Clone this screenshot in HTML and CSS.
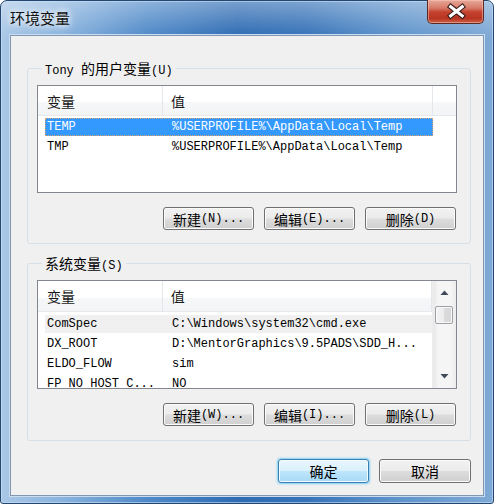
FILE: index.html
```html
<!DOCTYPE html>
<html lang="zh-CN">
<head>
<meta charset="utf-8">
<title>环境变量</title>
<link rel="stylesheet" href="styles.css">
</head>
<body>
<div class="window">
  <div class="titlebar">
    <span class="title">环境变量</span>
    <div class="close">
      <svg width="57" height="24" viewBox="0 0 57 24">
        <path d="M23.5 6.5 L35.5 16 M35.5 6.5 L23.5 16" stroke="#3a1d1a" stroke-width="5.5" stroke-linecap="square" fill="none"/>
        <path d="M23.5 6.5 L35.5 16 M35.5 6.5 L23.5 16" stroke="#ffffff" stroke-width="3.2" stroke-linecap="square" fill="none"/>
      </svg>
    </div>
  </div>
  <div class="client">
    <fieldset class="group first">
      <legend>Tony <span class="zh">的用户变量</span>(U)</legend>
      <div class="list">
        <div class="listmain">
          <div class="header">
            <div class="hcell c1"><span class="zh">变量</span></div>
            <div class="hcell c2"><span class="zh">值</span></div>
            <div class="hcell filler"></div>
          </div>
          <div class="rows">
            <div class="row selected"><span class="c1">TEMP</span><span class="c2">%USERPROFILE%\AppData\Local\Temp</span></div>
            <div class="row"><span class="c1">TMP</span><span class="c2">%USERPROFILE%\AppData\Local\Temp</span></div>
          </div>
        </div>
      </div>
      <div class="buttons">
        <button class="btn"><span class="zh">新建</span>(N)...</button>
        <button class="btn"><span class="zh">编辑</span>(E)...</button>
        <button class="btn"><span class="zh">删除</span>(D)</button>
      </div>
    </fieldset>

    <fieldset class="group second">
      <legend><span class="zh">系统变量</span>(S)</legend>
      <div class="list tall">
        <div class="listmain">
          <div class="header">
            <div class="hcell c1"><span class="zh">变量</span></div>
            <div class="hcell c2"><span class="zh">值</span></div>
          </div>
          <div class="rows">
            <div class="row hot"><span class="c1">ComSpec</span><span class="c2">C:\Windows\system32\cmd.exe</span></div>
            <div class="row"><span class="c1">DX_ROOT</span><span class="c2">D:\MentorGraphics\9.5PADS\SDD_H...</span></div>
            <div class="row"><span class="c1">ELDO_FLOW</span><span class="c2">sim</span></div>
            <div class="row"><span class="c1">FP_NO_HOST_C...</span><span class="c2">NO</span></div>
          </div>
        </div>
        <div class="scrollbar">
          <div class="sbtn">
            <svg width="9" height="6" viewBox="0 0 9 6"><polygon points="4.5,0.5 8.5,5 0.5,5" fill="#3f4a57"/></svg>
          </div>
          <div class="track"><div class="thumb"></div></div>
          <div class="sbtn">
            <svg width="9" height="6" viewBox="0 0 9 6"><polygon points="0.5,1 8.5,1 4.5,5.5" fill="#3f4a57"/></svg>
          </div>
        </div>
      </div>
      <div class="buttons">
        <button class="btn"><span class="zh">新建</span>(W)...</button>
        <button class="btn"><span class="zh">编辑</span>(I)...</button>
        <button class="btn"><span class="zh">删除</span>(L)</button>
      </div>
    </fieldset>

    <div class="dialog-buttons">
      <button class="btn big default"><span class="zh">确定</span></button>
      <button class="btn big"><span class="zh">取消</span></button>
    </div>
  </div>
</div>
</body>
</html>
```
FILE: styles.css
```css
html, body {
  margin: 0;
  padding: 0;
  background: #ffffff;
}

body {
  width: 494px;
  height: 504px;
  overflow: hidden;
  font-family: "Liberation Mono", "Noto Sans CJK SC", monospace;
  font-size: 12px;
  color: #000;
}

.zh {
  font-family: "Noto Sans CJK SC", sans-serif;
  font-size: 14px;
}

.window {
  width: 494px;
  height: 504px;
  box-sizing: border-box;
  border: 1px solid #24466f;
  border-radius: 7px 7px 3px 3px;
  padding: 0 9px 7px 9px;
  display: flex;
  flex-direction: column;
  background:
    linear-gradient(180deg, rgba(255,255,255,0.35) 0px, rgba(255,255,255,0.05) 30px, rgba(255,255,255,0) 40px),
    linear-gradient(90deg, #a9c7e6 0%, #8ab4de 12%, #4f89c8 30%, #2f6cb3 48%, #3773b8 62%, #5e93cb 80%, #7fa9d6 100%);
  box-shadow: inset 0 0 0 1px rgba(200, 225, 250, 0.6);
}

.titlebar {
  height: 34px;
  display: flex;
  justify-content: space-between;
  align-items: flex-start;
}

.title {
  font-family: "Noto Sans CJK SC", sans-serif;
  font-size: 15px;
  line-height: 20px;
  padding-top: 7px;
  color: #101010;
  text-shadow: 0 0 6px #ffffff, 0 0 10px rgba(255,255,255,0.9);
}

.close {
  width: 57px;
  height: 24px;
  margin-top: -1px;
  box-sizing: border-box;
  border: 1px solid #5b2a24;
  border-top: none;
  border-radius: 0 0 5px 5px;
  background: linear-gradient(180deg, #e6a899 0%, #d77a68 35%, #c4432f 52%, #b83422 80%, #d06248 100%);
  box-shadow: inset 0 0 0 1px rgba(255, 210, 200, 0.45);
  display: flex;
  align-items: center;
  justify-content: center;
}

.close svg {
  display: block;
}

.client {
  flex: 1;
  background: #f0f0f0;
  border: 1px solid #8297b2;
  box-shadow: 0 0 0 1px #c9dcf0;
  padding: 0 12px 0 16px;
  display: flex;
  flex-direction: column;
}

.group {
  margin: 0;
  border: 1px solid #d5dfe5;
  border-radius: 3px;
  padding: 0 13px 13px 9px;
  min-width: 0;
}

.group.first {
  margin-top: 24px;
}

.group.second {
  margin-top: 11px;
  padding-bottom: 14px;
}

.group legend {
  margin-left: 5px;
  padding: 0 3px;
  line-height: 16px;
  height: 16px;
  white-space: pre;
}

.list {
  margin-top: 9px;
  height: 108px;
  box-sizing: border-box;
  border: 1px solid #828790;
  background: #ffffff;
  display: flex;
  overflow: hidden;
}

.list.tall {
  margin-top: 9px;
  height: 109px;
}

.listmain {
  flex: 1;
  min-width: 0;
  display: flex;
  flex-direction: column;
}

.header {
  display: flex;
  height: 30px;
  flex: none;
  box-sizing: border-box;
  border-bottom: 1px solid #e5e8ec;
  background: linear-gradient(180deg, #ffffff 0%, #ffffff 55%, #f6f7f9 56%, #f3f4f6 100%);
}

.list.tall .header {
  height: 31px;
}

.hcell {
  display: flex;
  align-items: center;
  box-sizing: border-box;
  color: #1a1a1a;
}

.hcell.c1 {
  width: 125px;
  padding-left: 9px;
  border-right: 1px solid #e3e6ea;
}

.hcell.c2 {
  width: 270px;
  padding-left: 8px;
  border-right: 1px solid #e3e6ea;
}

.hcell.filler {
  flex: 1;
}

.rows {
  padding-top: 2px;
}

.list.tall .rows {
  padding-top: 3px;
}

.row {
  display: flex;
  margin-left: 7px;
  width: 388px;
  height: 18px;
  line-height: 18px;
  margin-bottom: 2px;
  white-space: pre;
  overflow: hidden;
  flex: none;
}

.row .c1 {
  width: 118px;
  padding-left: 2px;
  box-sizing: border-box;
  overflow: hidden;
}

.row .c2 {
  padding-left: 9px;
}

.row.selected {
  background: #3399ff;
  color: #ffffff;
  outline: 1px dotted #d9a06a;
  outline-offset: -1px;
}

.row.hot {
  background: #f0f0f0;
}

.scrollbar {
  width: 23px;
  flex: none;
  display: flex;
  flex-direction: column;
  background: linear-gradient(90deg, #e8e8e8 0%, #f5f5f5 25%, #f5f5f5 75%, #ececec 100%);
  border-left: 1px solid #eeeeee;
}

.sbtn {
  height: 24px;
  flex: none;
  display: flex;
  align-items: center;
  justify-content: center;
}

.sbtn svg {
  display: block;
}

.track {
  flex: 1;
  padding: 1px 3px 0 2px;
}

.thumb {
  height: 18px;
  box-sizing: border-box;
  border: 1px solid #9c9fa5;
  border-radius: 2px;
  background: linear-gradient(90deg, #f3f3f3 0%, #ececec 50%, #dcdcdc 51%, #d6d6d6 100%);
  box-shadow: inset 0 0 0 1px #fafafa;
}

.buttons {
  margin-top: 14px;
  margin-right: 1px;
  display: flex;
  justify-content: flex-end;
  gap: 10px;
}

.btn {
  width: 91px;
  height: 23px;
  margin: 0;
  padding: 0;
  box-sizing: border-box;
  border: 1px solid #707070;
  border-radius: 3px;
  background: linear-gradient(180deg, #f2f2f2 0%, #ebebeb 48%, #dddddd 52%, #cfcfcf 100%);
  box-shadow: inset 0 0 0 1px #fbfbfb;
  font-family: "Liberation Mono", "Noto Sans CJK SC", monospace;
  font-size: 12px;
  line-height: 16px;
  color: #000;
  display: flex;
  align-items: center;
  justify-content: center;
  white-space: pre;
}

.dialog-buttons {
  margin-top: 18px;
  margin-right: 0;
  display: flex;
  justify-content: flex-end;
  gap: 10px;
}

.btn.big {
  height: 24px;
}

.btn.big:last-child {
  width: 92px;
}

.btn.default {
  border-color: #3c7fb1;
  background: linear-gradient(180deg, #eaf6fd 0%, #d9f0fc 48%, #bee6fd 52%, #a7d9f5 100%);
  box-shadow: inset 0 0 0 1px #f4fbff, 0 0 2px 1px #7fcff4;
}
```
